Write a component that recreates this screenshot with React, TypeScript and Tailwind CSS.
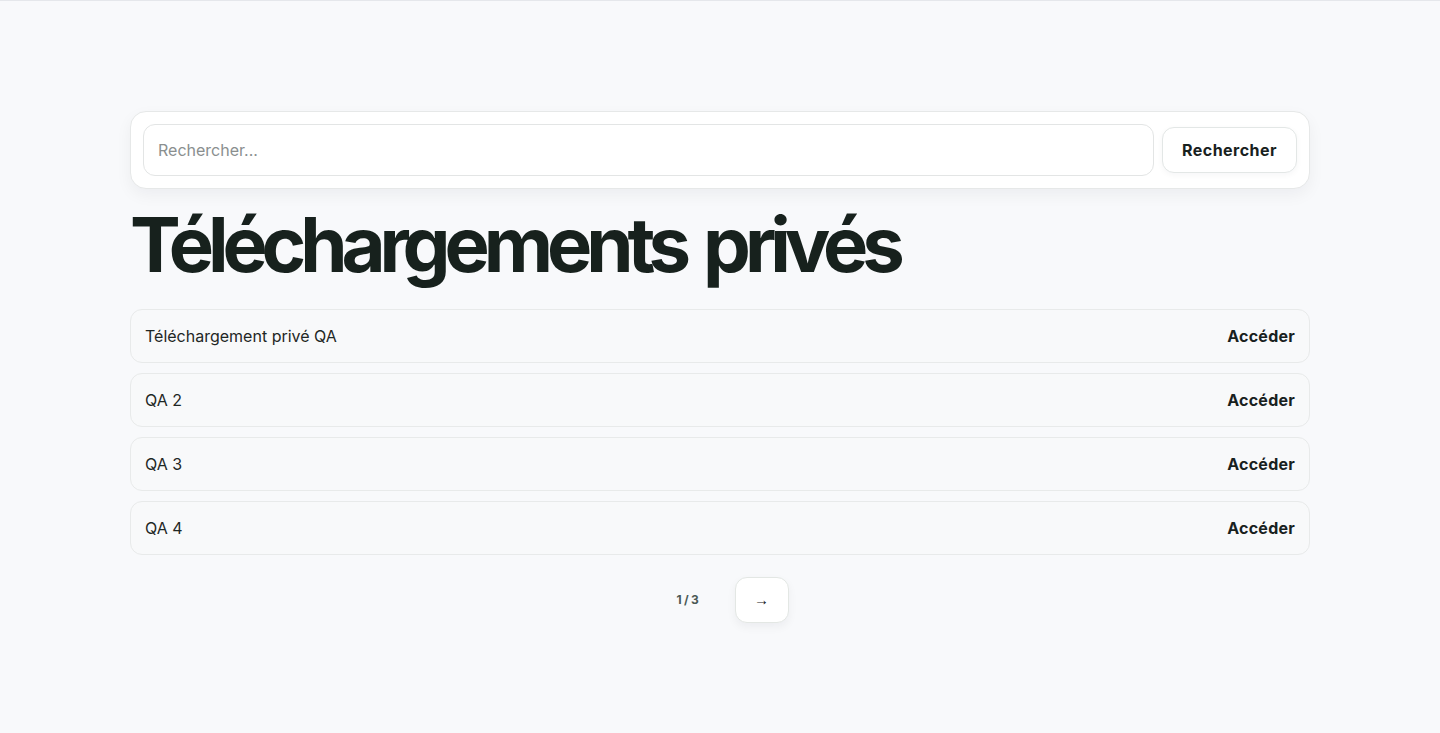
export default function App() {
  const rows = ['Téléchargement privé QA', 'QA 2', 'QA 3', 'QA 4'];
  return (
    <div className="min-h-[733px] bg-[#f8f9fb] border-t border-[#e5e7eb]" style={{ fontFamily: 'Inter, "Noto Sans", sans-serif' }}>
      <div className="mx-auto w-[1180px] pt-[110px]">
        <div className="flex items-center gap-2 rounded-2xl border border-[#e6e8e8] bg-white p-3 shadow-[0_6px_16px_rgba(16,24,40,0.05)]">
          <input
            className="h-[52px] flex-1 rounded-xl border border-[#e3e5e5] bg-white px-[14px] text-[16px] text-[#1a211f] outline-none placeholder:text-[#8a8f8f]"
            placeholder="Rechercher..."
          />
          <button className="h-[46px] w-[135px] rounded-xl border border-[#e3e7e6] bg-white text-[16px] font-bold tracking-[0.03em] text-[#18211e] shadow-[0_2px_6px_rgba(16,24,40,0.04)]">
            Rechercher
          </button>
        </div>
        <h1 className="mt-[10px] text-[76px] font-bold leading-[90px] tracking-[-0.08em] text-[#17211d] [word-spacing:0.08em]">
          Téléchargements privés
        </h1>
        <div className="mt-[20px] flex flex-col gap-[10px]">
          {rows.map((r) => (
            <div key={r} className="flex h-[54px] items-center justify-between rounded-xl border border-[#e8eaea] bg-[#f8f9fa] px-[14px]">
              <span className="text-[16px] text-[#1f2725]">{r}</span>
              <span className="text-[16px] font-bold tracking-[0.015em] text-[#18211e]">Accéder</span>
            </div>
          ))}
        </div>
        <div className="mt-[22px] flex items-center justify-center gap-9 pl-[25px]">
          <span className="text-[12px] font-bold tracking-[-0.02em] text-[#4b5a55]">1 / 3</span>
          <button className="h-[46px] w-[54px] rounded-xl border border-[#e3e7e4] bg-white text-[15px] text-[#18211e] shadow-[0_4px_10px_rgba(16,24,40,0.05)]" style={{ fontFamily: '"Liberation Sans", sans-serif' }}>
            →
          </button>
        </div>
      </div>
    </div>
  );
}
